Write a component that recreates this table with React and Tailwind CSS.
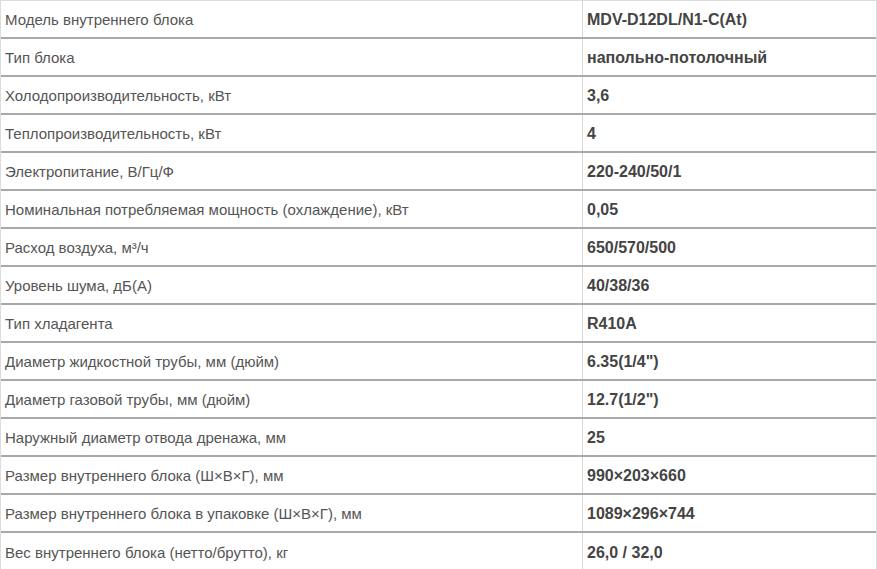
import React from 'react'

const ROWS = [
  ['Модель внутреннего блока', 'MDV-D12DL/N1-C(At)'],
  ['Тип блока', 'напольно-потолочный'],
  ['Холодопроизводительность, кВт', '3,6'],
  ['Теплопроизводительность, кВт', '4'],
  ['Электропитание, В/Гц/Ф', '220-240/50/1'],
  ['Номинальная потребляемая мощность (охлаждение), кВт', '0,05'],
  ['Расход воздуха, м³/ч', '650/570/500'],
  ['Уровень шума, дБ(А)', '40/38/36'],
  ['Тип хладагента', 'R410A'],
  ['Диаметр жидкостной трубы, мм (дюйм)', '6.35(1/4")'],
  ['Диаметр газовой трубы, мм (дюйм)', '12.7(1/2")'],
  ['Наружный диаметр отвода дренажа, мм', '25'],
  ['Размер внутреннего блока (Ш×В×Г), мм', '990×203×660'],
  ['Размер внутреннего блока в упаковке (Ш×В×Г), мм', '1089×296×744'],
  ['Вес внутреннего блока (нетто/брутто), кг', '26,0 / 32,0'],
]

export default function App() {
  return (
    <div className="w-[877px] h-[569px] overflow-hidden bg-white font-['Liberation_Sans',Arial,sans-serif] text-[15px]">
      <div className="border-t border-l border-r border-[#dcdcdc]">
        {ROWS.map(([label, value], i) => (
          <div
            key={i}
            className={`grid grid-cols-[581px_1fr] h-[38px] ${i < ROWS.length - 1 ? 'border-b-2 border-[#a9a9a9]' : ''}`}
          >
            <div className="flex items-center pl-[4px] pt-[2px] text-[#555]">{label}</div>
            <div className="flex items-center pl-[4px] pt-[2px] border-l border-[#d9d9d9] font-bold text-[16px] text-[#444]">
              {value}
            </div>
          </div>
        ))}
      </div>
    </div>
  )
}
